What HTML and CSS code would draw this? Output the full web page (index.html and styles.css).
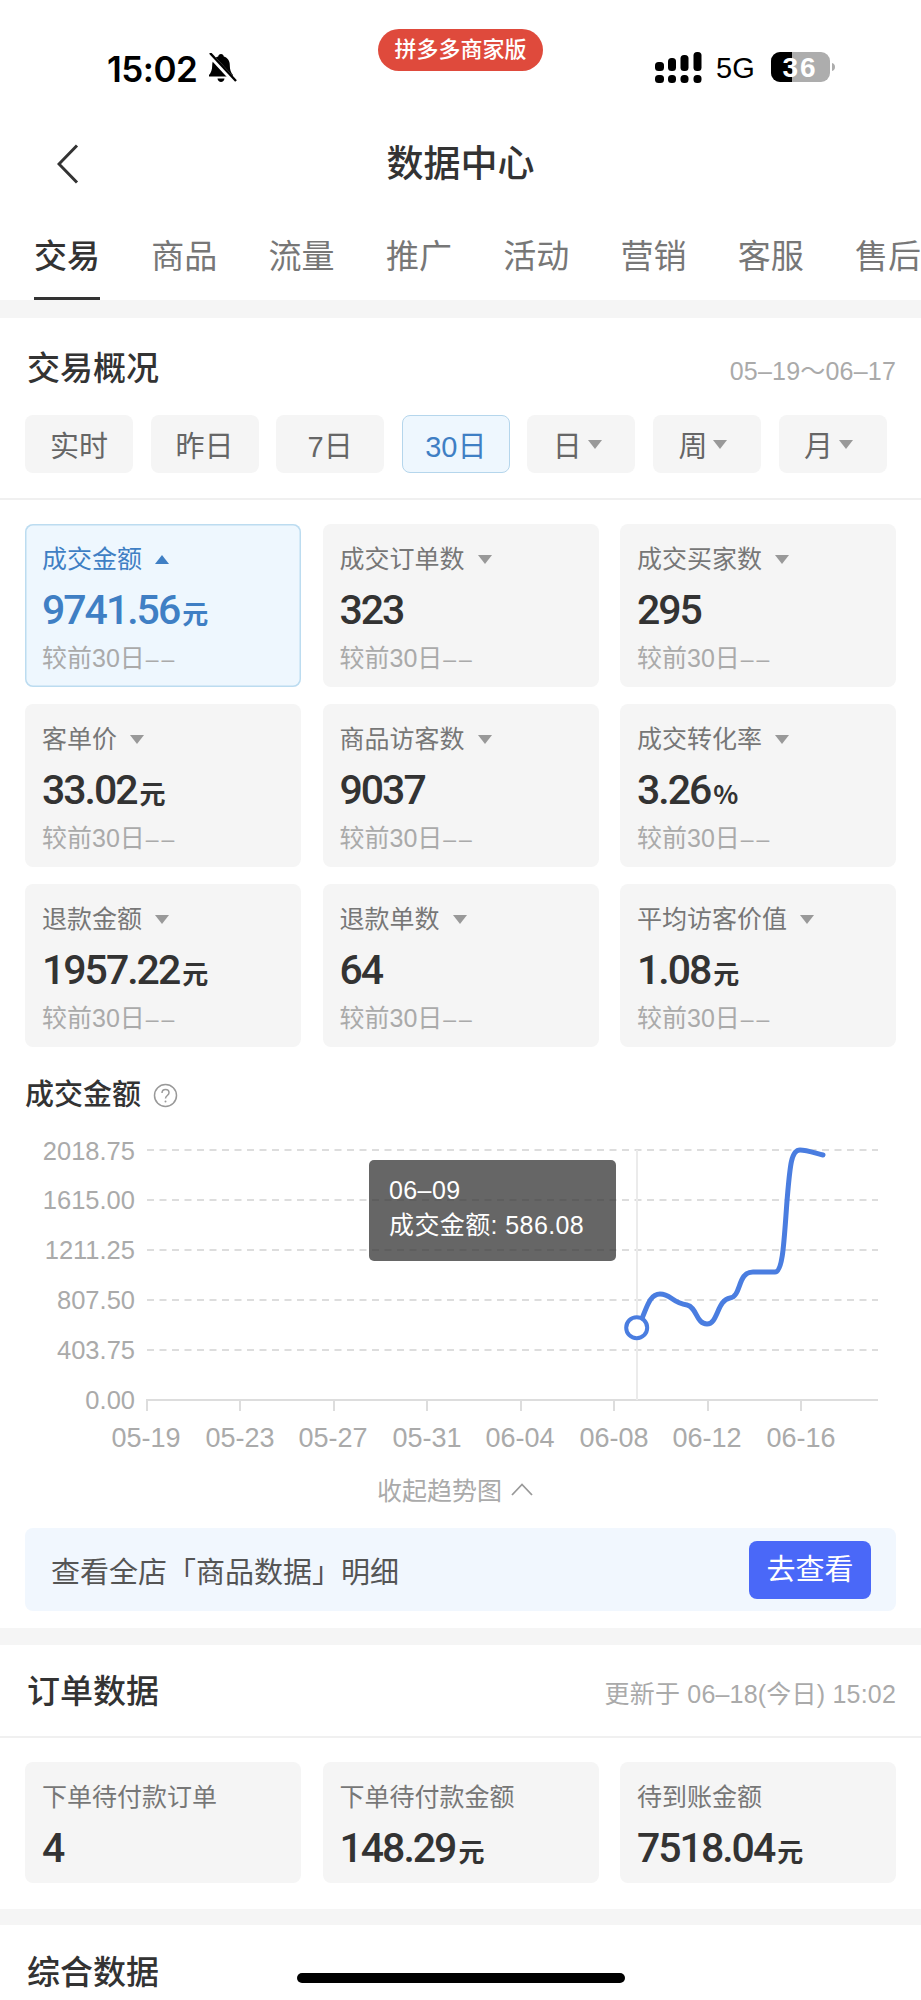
FILE: index.html
```html
<!DOCTYPE html>
<html>
    <head>
        <meta charset="utf-8"/>
        <meta name="viewport" content="width=device-width"/>
        <title>数据中心</title>
        <link rel="stylesheet" href="styles.css">
    </head>
    <body>
        <div class="page">
            <!-- 状态栏 -->
            <div class="status">
                <div class="status-left">
                    <span class="time">15:02</span>
                    <svg class="bell" width="31" height="31" viewBox="0 0 31 31">
                        <path d="M15 1c1.600 0 2.600 1 2.800 2.400 4 1.200 6 4.500 6 9 0 4.500 1.200 7 3.200 9.600v1.500H3v-1.500c2-2.600 3.200-5.100 3.200-9.600 0-4.500 2-7.800 6-9C12.400 2 13.400 1 15 1z" fill="#000"/>
                        <path d="M11.500 25.500h7c-.3 2-1.700 3.500-3.500 3.500s-3.200-1.500-3.500-3.500z" fill="#000"/>
                        <path d="M3 1l25 27" stroke="#fff" stroke-width="5"/>
                        <path d="M4 0l26 28" stroke="#000" stroke-width="2.400"/>
                    </svg>
                </div>
                <div class="pill">拼多多商家版</div>
                <div class="status-right">
                    <svg width="47" height="31" viewBox="0 0 47 31" fill="#000">
                        <rect x="0" y="10" width="9" height="9" rx="3.500"/>
                        <rect x="13" y="6" width="8" height="13" rx="3.500"/>
                        <rect x="25.500" y="3" width="8" height="16" rx="3.500"/>
                        <rect x="38.500" y="0" width="8" height="19" rx="3.500"/>
                        <rect x="0" y="23" width="9" height="8" rx="3.500"/>
                        <rect x="13" y="23" width="8" height="8" rx="3.500"/>
                        <rect x="25.500" y="23" width="8" height="8" rx="3.500"/>
                        <rect x="38.500" y="23" width="8" height="8" rx="3.500"/>
                    </svg>
                    <span class="net">5G</span>
                    <svg class="battery" width="64" height="30" viewBox="0 0 64 30">
                        <clipPath id="batt"><rect width="59" height="30" rx="9"/></clipPath>
                        <g clip-path="url(#batt)">
                            <rect width="59" height="30" fill="#adadad"/>
                            <rect width="21" height="30" fill="#000"/>
                        </g>
                        <path d="M61 11c2 .5 3 2 3 4s-1 3.500-3 4z" fill="#adadad"/>
                        <text x="29" y="25" text-anchor="middle" class="batt-num">36</text>
                    </svg>
                </div>
            </div>

            <!-- 标题 -->
            <div class="nav">
                <svg class="back" width="22" height="40" viewBox="0 0 22 40">
                    <path d="M20 1.500L2 20l18 18.500" fill="none" stroke="#333" stroke-width="3"/>
                </svg>
                <div class="nav-title">数据中心</div>
            </div>

            <div class="tabs">
                <div class="tab tab-on">交易</div>
                <div class="tab">商品</div>
                <div class="tab">流量</div>
                <div class="tab">推广</div>
                <div class="tab">活动</div>
                <div class="tab">营销</div>
                <div class="tab">客服</div>
                <div class="tab">售后</div>
            </div>

            <div class="band band-top"></div>

            <!-- 交易概况 -->
            <div class="overview-head">
                <div class="sec-title">交易概况</div>
                <div class="sec-note">05–19～06–17</div>
            </div>
            <div class="ranges">
                <div class="range">实时</div>
                <div class="range">昨日</div>
                <div class="range">7日</div>
                <div class="range range-on">30日</div>
                <div class="range range-drop">日<i class="caret"></i></div>
                <div class="range range-drop">周<i class="caret"></i></div>
                <div class="range range-drop">月<i class="caret"></i></div>
            </div>
            <div class="line"></div>

            <div class="cards overview-cards">
                <div class="card card-on">
                    <div class="card-label">成交金额<i class="caret caret-up"></i></div>
                    <div class="card-num">9741.56<span class="unit">元</span></div>
                    <div class="card-sub">较前30日<span class="dash">––</span></div>
                </div>
                <div class="card">
                    <div class="card-label">成交订单数<i class="caret"></i></div>
                    <div class="card-num">323</div>
                    <div class="card-sub">较前30日<span class="dash">––</span></div>
                </div>
                <div class="card">
                    <div class="card-label">成交买家数<i class="caret"></i></div>
                    <div class="card-num">295</div>
                    <div class="card-sub">较前30日<span class="dash">––</span></div>
                </div>
                <div class="card">
                    <div class="card-label">客单价<i class="caret"></i></div>
                    <div class="card-num">33.02<span class="unit">元</span></div>
                    <div class="card-sub">较前30日<span class="dash">––</span></div>
                </div>
                <div class="card">
                    <div class="card-label">商品访客数<i class="caret"></i></div>
                    <div class="card-num">9037</div>
                    <div class="card-sub">较前30日<span class="dash">––</span></div>
                </div>
                <div class="card">
                    <div class="card-label">成交转化率<i class="caret"></i></div>
                    <div class="card-num">3.26<span class="unit">%</span></div>
                    <div class="card-sub">较前30日<span class="dash">––</span></div>
                </div>
                <div class="card">
                    <div class="card-label">退款金额<i class="caret"></i></div>
                    <div class="card-num">1957.22<span class="unit">元</span></div>
                    <div class="card-sub">较前30日<span class="dash">––</span></div>
                </div>
                <div class="card">
                    <div class="card-label">退款单数<i class="caret"></i></div>
                    <div class="card-num">64</div>
                    <div class="card-sub">较前30日<span class="dash">––</span></div>
                </div>
                <div class="card">
                    <div class="card-label">平均访客价值<i class="caret"></i></div>
                    <div class="card-num">1.08<span class="unit">元</span></div>
                    <div class="card-sub">较前30日<span class="dash">––</span></div>
                </div>
            </div>

            <!-- 趋势图 -->
            <div class="chart-title">
                成交金额
                <svg width="25" height="25" viewBox="0 0 25 25">
                    <circle cx="12.500" cy="12.500" r="11" fill="none" stroke="#999" stroke-width="1.500"/>
                    <path d="M9 10c0-2.200 1.500-3.500 3.500-3.500s3.500 1.300 3.500 3.200c0 2.800-3.500 2.800-3.500 5.800" fill="none" stroke="#999" stroke-width="1.500"/>
                    <circle cx="12.500" cy="18.500" r="1" fill="#999"/>
                </svg>
            </div>
            <div class="chart">
                <svg class="chart-svg" width="921" height="340" viewBox="0 1130 921 340">
                    <g class="grid">
                        <path d="M147 1149H878"/>
                        <path d="M147 1199H878"/>
                        <path d="M147 1249H878"/>
                        <path d="M147 1299H878"/>
                        <path d="M147 1349H878"/>
                    </g>
                    <path class="axis" d="M146 1399H878M147 1399V1410M240 1399V1410M334 1399V1410M427 1399V1410M521 1399V1410M614 1399V1410M708 1399V1410M801 1399V1410"/>
                    <path class="cursor" d="M637 1149V1399"/>
                    <g class="y-labels">
                        <text x="135" y="1159">2018.75</text>
                        <text x="135" y="1208">1615.00</text>
                        <text x="135" y="1258">1211.25</text>
                        <text x="135" y="1308">807.50</text>
                        <text x="135" y="1358">403.75</text>
                        <text x="135" y="1408">0.00</text>
                    </g>
                    <g class="x-labels">
                        <text x="146" y="1446">05-19</text>
                        <text x="240" y="1446">05-23</text>
                        <text x="333" y="1446">05-27</text>
                        <text x="427" y="1446">05-31</text>
                        <text x="520" y="1446">06-04</text>
                        <text x="614" y="1446">06-08</text>
                        <text x="707" y="1446">06-12</text>
                        <text x="801" y="1446">06-16</text>
                    </g>
                    <path class="trend" d="M637 1327C646 1314 647 1293 660 1293C671 1293 672 1302 687 1304C697 1306 696 1323 707 1323C718 1323 717 1299 730 1297C742 1295 737 1271 753 1271L775 1271C783 1271 784 1240 787 1200C790 1165 791 1149 800 1149C806 1149 815 1152 823 1154"/>
                    <circle class="dot" cx="636.700" cy="1326.700" r="10.500"/>
                </svg>
                <div class="tip">
                    <div>06–09</div>
                    <div>成交金额: 586.08</div>
                </div>
            </div>
            <div class="collapse">
                收起趋势图
                <svg width="22" height="13" viewBox="0 0 22 13">
                    <path d="M1 12L11 1.500 21 12" fill="none" stroke="#999" stroke-width="1.800"/>
                </svg>
            </div>

            <div class="banner">
                <span>查看全店「商品数据」明细</span>
                <div class="banner-btn">去查看</div>
            </div>

            <div class="band band-mid"></div>

            <!-- 订单数据 -->
            <div class="order-head">
                <div class="sec-title">订单数据</div>
                <div class="sec-note">更新于 06–18(今日) 15:02</div>
            </div>
            <div class="line"></div>
            <div class="cards order-cards">
                <div class="card card-short">
                    <div class="card-label">下单待付款订单</div>
                    <div class="card-num">4</div>
                </div>
                <div class="card card-short">
                    <div class="card-label">下单待付款金额</div>
                    <div class="card-num">148.29<span class="unit">元</span></div>
                </div>
                <div class="card card-short">
                    <div class="card-label">待到账金额</div>
                    <div class="card-num">7518.04<span class="unit">元</span></div>
                </div>
            </div>

            <div class="band band-low"></div>

            <div class="last-head">
                <div class="sec-title">综合数据</div>
            </div>

            <div class="home-bar"></div>
        </div>
    </body>
</html>
```

FILE: styles.css
```css
* {
    box-sizing: border-box;
}
body {
    margin: 0;
    background: #fff;
    font-family: "Liberation Sans", "Noto Sans CJK SC", sans-serif;
    color: #333;
}
.page {
    position: relative;
    width: 921px;
    height: 2000px;
    overflow: hidden;
    background: #fff;
}

/* 状态栏 */
.status {
    display: grid;
    grid-template-columns: 1fr auto 1fr;
    height: 100px;
}
.status-left {
    display: flex;
    align-items: center;
    gap: 9px;
    padding: 37px 0 0 107px;
    height: 100px;
}
.time {
    font-family: Inter, sans-serif;
    font-size: 35px;
    font-weight: 600;
    letter-spacing: -.5px;
    line-height: 30px;
    color: #000;
}
.pill {
    align-self: start;
    margin-top: 29px;
    width: 165px;
    height: 42px;
    border-radius: 21px;
    background: #df4a3c;
    color: #fff;
    font-size: 22px;
    font-weight: 500;
    line-height: 42px;
    text-align: center;
}
.status-right {
    display: flex;
    align-items: flex-start;
    padding: 52px 0 0 112px;
}
.net {
    margin-left: 14px;
    width: 55px;
    font-size: 29px;
    line-height: 32px;
    color: #000;
}
.batt-num {
    font-family: "Liberation Sans", sans-serif;
    font-size: 28px;
    font-weight: 700;
    letter-spacing: 2px;
    fill: #fff;
}

/* 导航 */
.nav {
    display: flex;
    align-items: center;
    justify-content: center;
    position: relative;
    height: 126px;
    padding-top: 3px;
}
.back {
    position: absolute;
    left: 57px;
    top: 44px;
}
.nav-title {
    font-size: 37px;
    font-weight: 500;
    line-height: 50px;
    color: #333;
}
.tabs {
    display: flex;
    gap: 51.300px;
    height: 74px;
    padding-left: 34px;
    white-space: nowrap;
}
.tab {
    font-size: 33px;
    line-height: 62px;
    color: #777;
}
.tab-on {
    font-weight: 500;
    color: #333;
    border-bottom: 3px solid #333;
}
.band {
    background: #f5f5f5;
}
.band-top {
    height: 18px;
}
.band-mid {
    height: 17px;
    margin-top: 17px;
}
.band-low {
    height: 16px;
    margin-top: 26px;
}

/* 区块标题 */
.overview-head,
.order-head {
    display: flex;
    align-items: center;
    justify-content: space-between;
    padding: 0 25px 0 27px;
}
.overview-head {
    height: 60px;
    margin-top: 21px;
}
.order-head {
    height: 91px;
    padding-top: 3px;
}
.last-head {
    padding: 24px 0 0 27px;
}
.sec-title {
    font-size: 33px;
    font-weight: 500;
    line-height: 48px;
    color: #333;
}
.sec-note {
    font-size: 25px;
    letter-spacing: .2px;
    color: #aaa;
}
.ranges {
    display: flex;
    gap: 17.600px;
    margin-top: 16px;
    padding: 0 25px 25px;
}
.range {
    display: flex;
    align-items: center;
    justify-content: center;
    gap: 6px;
    width: 108px;
    height: 58px;
    border-radius: 8px;
    background: #f5f5f5;
    font-size: 29px;
    color: #666;
}
.range-drop {
    padding-right: 8px;
}
.range-on {
    background: #eef7fe;
    border: 1.500px solid #b5d6ec;
    color: #3f7fc4;
}
.caret {
    display: inline-block;
    width: 0;
    height: 0;
    border-left: 7px solid transparent;
    border-right: 7px solid transparent;
    border-top: 9px solid #999;
}
.caret-up {
    border-top: 0;
    border-bottom: 9px solid #3f7fc4;
}
.line {
    height: 2px;
    background: #f0f0f0;
}

/* 指标卡片 */
.cards {
    display: grid;
    grid-template-columns: repeat(3, 1fr);
    gap: 17px 21.500px;
    padding: 24px 25px 0 25px;
}
.card {
    height: 163px;
    padding: 18px 0 0 17px;
    border-radius: 8px;
    background: #f5f5f5;
}
.card-short {
    height: 121px;
}
.card-on {
    background: #eef7fe;
    box-shadow: inset 0 0 0 1.500px #bcdcf0;
}
.card-label {
    display: flex;
    align-items: center;
    gap: 13px;
    font-size: 25px;
    line-height: 34px;
    color: #777;
}
.card-num {
    height: 50px;
    margin-top: 9px;
    font-family: Roboto, sans-serif;
    font-size: 41px;
    font-weight: 500;
    letter-spacing: -2px;
    line-height: 50px;
    color: #333;
}
.unit {
    margin-left: 3px;
    font-family: "Noto Sans CJK SC", sans-serif;
    font-size: 26px;
    font-weight: 700;
    letter-spacing: 0;
    line-height: 1;
}
.card-sub {
    margin-top: 8px;
    font-size: 25px;
    line-height: 30px;
    color: #aaa;
}
.dash {
    margin-left: 1px;
    font-size: 23px;
    letter-spacing: 3px;
}
.card-on .card-label,
.card-on .card-num {
    color: #3f7fc4;
}

/* 图表 */
.chart-title {
    display: flex;
    align-items: center;
    gap: 12px;
    margin-top: 32px;
    padding-left: 25px;
    font-size: 29px;
    font-weight: 500;
    line-height: 32px;
    color: #333;
}
.chart {
    position: relative;
    height: 340px;
    margin-top: 20px;
}
.chart-svg {
    display: block;
}
.grid path {
    stroke: #ddd;
    stroke-width: 2;
    stroke-dasharray: 7 5.500;
}
.axis {
    fill: none;
    stroke: #ddd;
    stroke-width: 2;
}
.cursor {
    stroke: #ebebeb;
    stroke-width: 2;
}
.y-labels text {
    font-size: 25.500px;
    fill: #aaa;
    text-anchor: end;
}
.x-labels text {
    font-size: 27px;
    fill: #aaa;
    text-anchor: middle;
}
.trend {
    fill: none;
    stroke: #4a7de0;
    stroke-width: 5;
    stroke-linecap: round;
}
.dot {
    fill: #fff;
    stroke: #4a7de0;
    stroke-width: 4;
}
.tip {
    position: absolute;
    left: 369px;
    top: 29px;
    width: 247px;
    height: 101px;
    padding: 13px 0 0 20px;
    border-radius: 5px;
    background: rgba(51, 51, 51, .75);
    color: #fff;
    font-size: 25px;
    letter-spacing: .4px;
    line-height: 35px;
}
.collapse {
    display: flex;
    align-items: center;
    justify-content: center;
    gap: 9px;
    height: 36px;
    padding-right: 11px;
    font-size: 25px;
    color: #aaa;
}
.banner {
    display: flex;
    align-items: center;
    justify-content: space-between;
    height: 83px;
    margin: 21px 25px 0 25px;
    padding: 0 25px 0 26px;
    border-radius: 8px;
    background: #f1f7fe;
    font-size: 29px;
    color: #555;
}
.banner-btn {
    width: 122px;
    height: 58px;
    border-radius: 8px;
    background: #4a68f8;
    color: #fff;
    font-size: 29px;
    line-height: 58px;
    text-align: center;
}

/* home 指示条 */
.home-bar {
    position: absolute;
    left: 297px;
    top: 1973px;
    width: 328px;
    height: 10px;
    border-radius: 5px;
    background: #000;
}
```
